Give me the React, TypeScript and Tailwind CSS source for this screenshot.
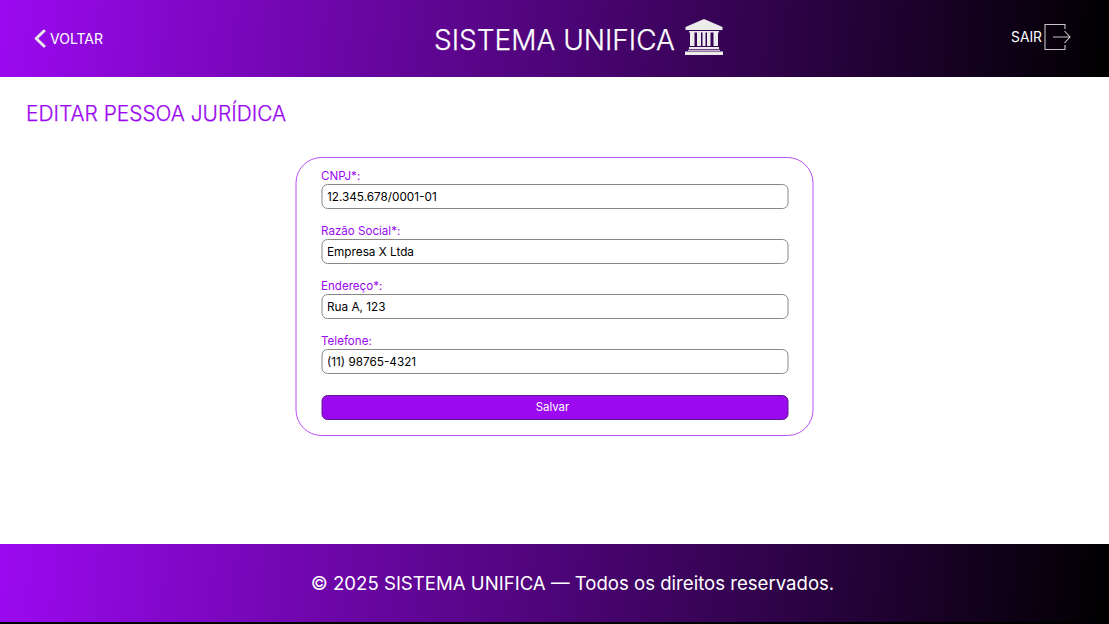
import React from 'react';

const fields = [
  { label: 'CNPJ*:', value: '12.345.678/0001-01' },
  { label: 'Razão Social*:', value: 'Empresa X Ltda' },
  { label: 'Endereço*:', value: 'Rua A, 123' },
  { label: 'Telefone:', value: '(11) 98765-4321' },
];

export default function App() {
  return (
    <div className="flex h-[624px] w-[1109px] flex-col overflow-hidden bg-white font-['Inter',sans-serif]">
      <header className="flex h-[77px] shrink-0 items-center justify-between bg-[linear-gradient(94deg,#9b09f0,#000)] text-white">
        <a className="flex w-[434px] items-center gap-1 pl-[34px] text-[14px] leading-none">
          <svg width="12" height="19" viewBox="0 0 12 19" fill="none" stroke="#e8e8e8" strokeWidth="3" strokeLinecap="round" strokeLinejoin="round"><path d="M10 2 2.200 9.500 10 17" /></svg>
          <span className="pt-px">VOLTAR</span>
        </a>
        <div className="flex shrink-0 items-center gap-[10px]">
          <h1 className="pt-[2px] text-[28px] leading-none font-light [-webkit-text-stroke:0.25px_white]">SISTEMA UNIFICA</h1>
          <svg className="mb-[3px]" width="38" height="36" viewBox="0 0 38 36" fill="#ececec">
            <path d="M19 0 37.500 8v3H.5V8zM4 12h30v1.500H4zM5 13h4.500v14H5zM12 13h4v14h-4zM17.500 13h3v14h-3zM22 13h3.500v14H22zM28.500 13H33v14h-4.500zM4 28h30v2H4zM3 30.800h32v1H3zM0 32.500h38V36H0z" />
          </svg>
        </div>
        <a className="flex flex-1 items-center justify-end gap-[2px] pr-[38px] pb-[3px] text-[13.8px] leading-none">
          <span className="pt-[2px]">SAIR</span>
          <svg width="27" height="28" viewBox="0 0 27 28" fill="none" stroke="#c5c5c5" strokeWidth="1.1"><path d="M21 6V1.500H1v25h20V22M9 14h17M20.500 8l5.500 6-5.500 6" /></svg>
        </a>
      </header>
      <main className="flex-1 pt-[25px]">
        <h2 className="pl-[26px] text-[20.9px] leading-6 font-light text-[#9b09f0] [-webkit-text-stroke:0.25px_#9b09f0]">EDITAR PESSOA JURÍDICA</h2>
        <form className="mx-auto mt-[31px] flex h-[279px] w-[518px] -translate-x-[0.5px] flex-col rounded-[26px] border border-[#9b09f0]/70 px-[25px] pt-[10px]">
          {fields.map((f) => (
            <label key={f.label} className="flex h-[55px] flex-col text-[11.6px] leading-4 text-[#9b09f0]">
              {f.label}
              <input defaultValue={f.value} className="h-[25px] w-[467px] rounded-[6px] border border-[#888] px-[5px] text-[11.75px] text-black" />
            </label>
          ))}
          <button type="button" className="mt-[7px] h-[24.5px] w-[467px] rounded-[6px] border border-[#5c1a87] bg-[#9b09f0] pr-1 text-[11.4px] leading-none text-white">Salvar</button>
        </form>
      </main>
      <footer className="flex h-[80px] shrink-0 items-center justify-center border-b-2 border-black bg-[linear-gradient(94deg,#9b09f0,#000)] pt-px pl-9 text-[18.6px] text-white">
        © 2025 SISTEMA UNIFICA — Todos os direitos reservados.
      </footer>
    </div>
  );
}
